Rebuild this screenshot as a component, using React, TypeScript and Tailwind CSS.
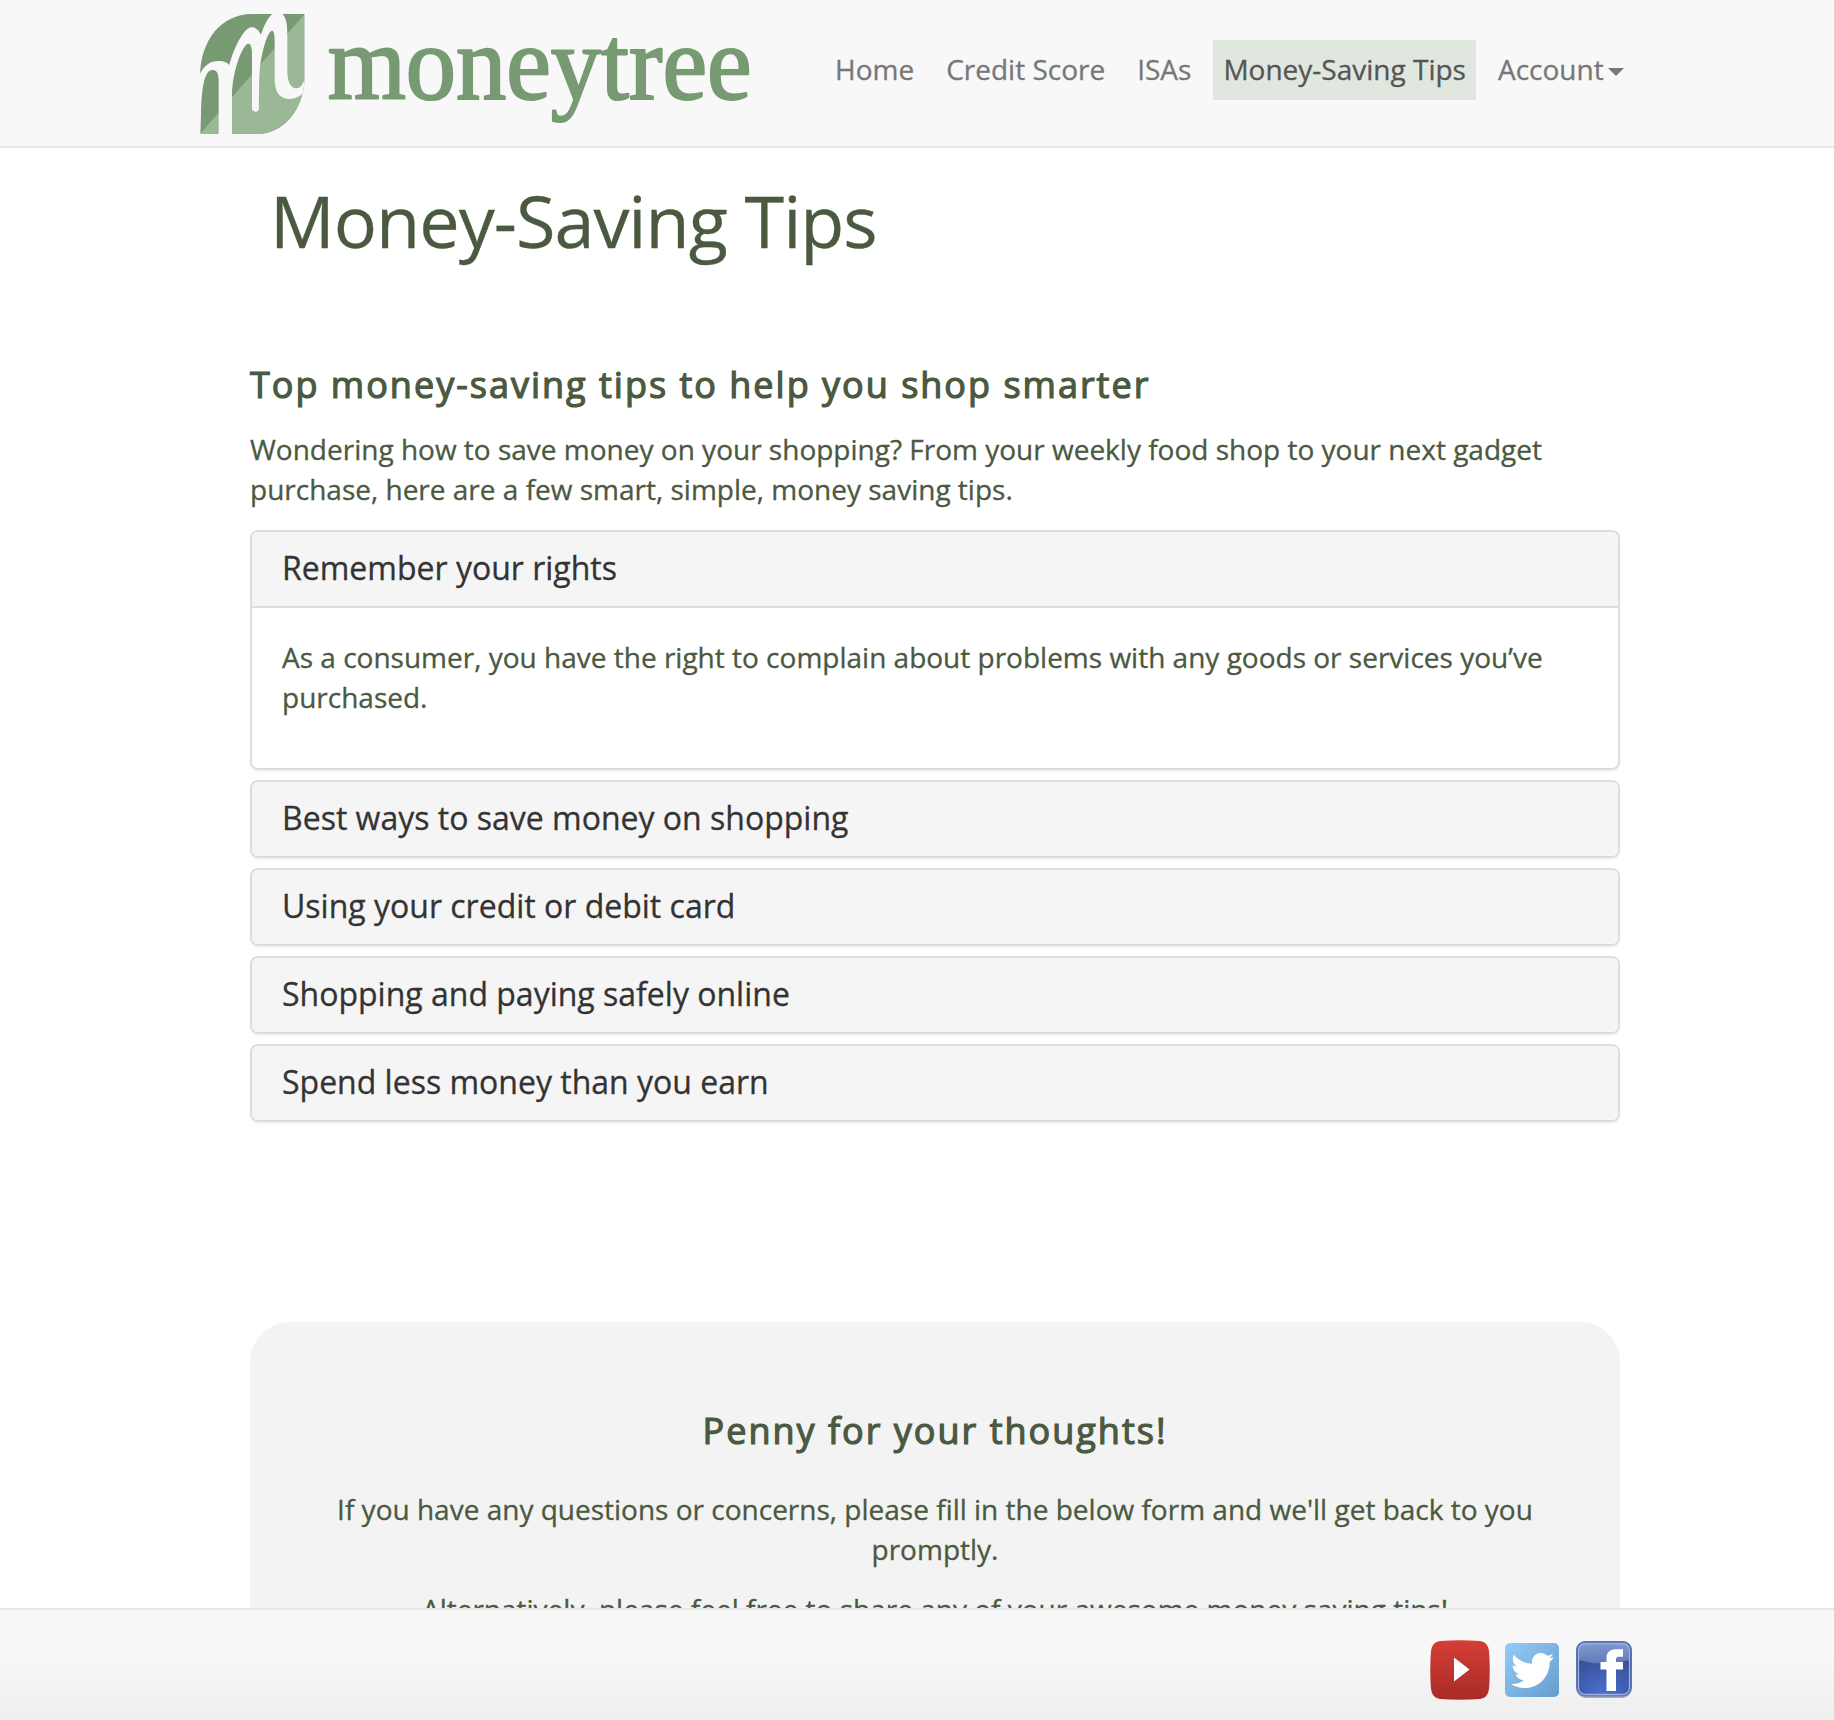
import { FaTwitter } from 'react-icons/fa'

const navItems = [
  { label: 'Home' },
  { label: 'Credit Score' },
  { label: 'ISAs' },
  { label: 'Money-Saving Tips', active: true },
  { label: 'Account', menu: true },
]

const tips = [
  {
    title: 'Remember your rights',
    body: 'As a consumer, you have the right to complain about problems with any goods or services you’ve purchased.',
  },
  { title: 'Best ways to save money on shopping' },
  { title: 'Using your credit or debit card' },
  { title: 'Shopping and paying safely online' },
  { title: 'Spend less money than you earn' },
]

function Logo() {
  return (
    <svg className="h-[146px] w-[570px] shrink-0 overflow-visible" viewBox="0 0 1710 438" aria-label="moneytree">
      <defs>
        <clipPath id="leaf">
          <path d="M30 230C30 120 95 42 185 42H344V236C340 330 280 402 200 402H30Z" />
        </clipPath>
      </defs>
      <g clipPath="url(#leaf)">
        <rect x="30" y="42" width="314" height="360" fill="#779a73" />
        <path d="M344 42V402H30Z" fill="#9bb896" />
        <path
          d="M26 228C42 196 60 183 85 183C104 183 113 189 118 195C130 150 160 82 185 82C200 82 208 94 213 104C224 72 240 36 262 36C284 36 292 62 292 100V215C292 250 306 265 319 265C334 265 340 250 346 232V275L336 283C322 294 310 297 297 297C265 297 254 270 254 235V120C254 98 250 92 246 92C238 92 224 120 213 180C208 210 207 240 207 325C207 339 186 339 186 325V155C184 135 180 131 175 131C160 131 128 205 126 285V404H86V240C85 216 78 210 68 210C50 210 35 235 33 345L31 404H26Z"
          fill="#f8f8f8"
        />
      </g>
      <text
        x="413"
        y="296"
        textLength="1272"
        lengthAdjust="spacingAndGlyphs"
        className="font-['Liberation_Serif',serif] text-[316px]"
        fill="#779a73"
        stroke="#779a73"
        strokeWidth="6.500"
        strokeLinejoin="round"
      >
        moneytree
      </text>
    </svg>
  )
}

function YouTubeIcon() {
  return (
    <svg className="size-[60px]" viewBox="0 0 60 60" aria-label="YouTube">
      <defs>
        <linearGradient id="yt" x1="0" y1="0" x2="0" y2="1">
          <stop offset="0" stopColor="#d43e35" />
          <stop offset="1" stopColor="#a82b28" />
        </linearGradient>
      </defs>
      <path
        d="M10 1Q30 -0.5 50 1Q58 2 59 11Q60.500 30 59 49Q58 58 50 59Q30 60.500 10 59Q2 58 1 49Q-0.500 30 1 11Q2 2 10 1Z"
        fill="url(#yt)"
      />
      <path d="M24 17.500L39.500 29.500L24 41.500Z" fill="#fff" />
    </svg>
  )
}

function TwitterIcon() {
  return (
    <div className="flex size-[54px] items-center justify-center rounded-[5px] bg-linear-to-br from-[#95cbf8] to-[#679dcd]">
      <FaTwitter className="size-[43px] text-white" />
    </div>
  )
}

function FacebookIcon() {
  return (
    <svg className="h-[58px] w-[56px]" viewBox="0 0 56 58" aria-label="Facebook">
      <defs>
        <radialGradient id="fb" cx="0.5" cy="1" r="0.75">
          <stop offset="0" stopColor="#4c6fd0" />
          <stop offset="1" stopColor="#38529a" />
        </radialGradient>
        <linearGradient id="gloss" x1="0" y1="0" x2="0" y2="1">
          <stop offset="0" stopColor="#8299cf" />
          <stop offset="1" stopColor="#607ab9" />
        </linearGradient>
      </defs>
      <rect x="0.500" y="1.500" width="55" height="55.500" rx="9" fill="#777" opacity="0.55" />
      <rect x="0" y="0" width="56" height="55.500" rx="9" fill="#5a73b3" />
      <rect x="1.500" y="1.500" width="53" height="52.500" rx="8" fill="url(#fb)" />
      <path d="M2 19V9Q2 2 9.500 2H46.500Q54 2 54 9V19Q28 26 2 19Z" fill="url(#gloss)" />
      <rect x="2.500" y="2.500" width="51" height="51" rx="7" fill="none" stroke="#9db0df" strokeWidth="1.300" />
      <path
        d="M30.500 50V28.500H24.500V21H30.500V17C30.500 11 34 8.200 40 8.200H47V15.800H43.500C40.500 15.800 40 17 40 19V21H47V28.500H40V50Z"
        fill="#fff"
      />
    </svg>
  )
}

export default function App() {
  return (
    <div className="flex h-[1720px] w-[1834px] flex-col overflow-hidden bg-white font-['Open_Sans',sans-serif] text-[28px] leading-[40px] text-[#4a5940] [-webkit-text-stroke:0.3px]">
      <header className="flex h-[148px] shrink-0 border-b-2 border-[#e7e7e7] bg-[#f8f8f8] pl-[190px]">
        <Logo />
        <nav className="mt-10 ml-[65px] flex h-[60px] gap-[12px] whitespace-nowrap">
          {navItems.map((item) => (
            <a
              key={item.label}
              className={
                item.active
                  ? 'flex items-center bg-[#dfe7de] px-[10px] pb-[2px] text-[#555]'
                  : 'flex items-center px-[10px] pb-[2px] text-[#777]'
              }
            >
              {item.label}
              {item.menu && (
                <span className="mt-[6px] ml-1 border-x-8 border-t-8 border-x-transparent border-t-[#777]" />
              )}
            </a>
          ))}
        </nav>
      </header>

      <main className="min-h-0 flex-1 overflow-hidden pr-[214px] pl-[250px]">
        <h1 className="mt-8 pl-[20px] text-[72px] leading-[80px] tracking-[-1px]">Money-Saving Tips</h1>
        <h3 className="mt-[105px] text-[36px] leading-[40px] tracking-[2px] [-webkit-text-stroke:1.2px]">
          Top money-saving tips to help you shop smarter
        </h3>
        <p className="mt-[24px] mb-[21px]">
          Wondering how to save money on your shopping? From your weekly food shop to your next gadget purchase, here
          are a few smart, simple, money saving tips.
        </p>

        <div className="flex flex-col gap-[10px]">
          {tips.map((tip) => (
            <section
              key={tip.title}
              className="overflow-hidden rounded-[8px] border-2 border-[#ddd] shadow-[0_2px_2px_rgba(0,0,0,0.05)]"
            >
              <h4 className="h-[74px] bg-[#f5f5f5] px-[30px] pt-[16px] text-[32px] text-[#333]">{tip.title}</h4>
              {tip.body && <p className="h-[162px] border-t-2 border-[#ddd] px-[30px] pt-[29px]">{tip.body}</p>}
            </section>
          ))}
        </div>

        <section className="mt-[200px] h-[600px] rounded-[40px] bg-[#f3f3f3] px-[80px] pt-[89px] text-center">
          <h3 className="text-[36px] leading-[40px] tracking-[2px] [-webkit-text-stroke:1.2px]">
            Penny for your thoughts!
          </h3>
          <p className="mt-[38px]">
            If you have any questions or concerns, please fill in the below form and we'll get back to you promptly.
          </p>
          <p className="mt-[20px]">Alternatively, please feel free to share any of your awesome money saving tips!</p>
        </section>
      </main>

      <footer className="flex h-[112px] shrink-0 items-start justify-end border-t-2 border-[#e7e7e7] bg-linear-to-b from-[#f8f8f8] from-40% to-[#eeeeee] pr-[202px]">
        <div className="mt-[30px]">
          <YouTubeIcon />
        </div>
        <div className="mt-[33px] ml-[15px]">
          <TwitterIcon />
        </div>
        <div className="mt-[31px] ml-[17px]">
          <FacebookIcon />
        </div>
      </footer>
    </div>
  )
}
